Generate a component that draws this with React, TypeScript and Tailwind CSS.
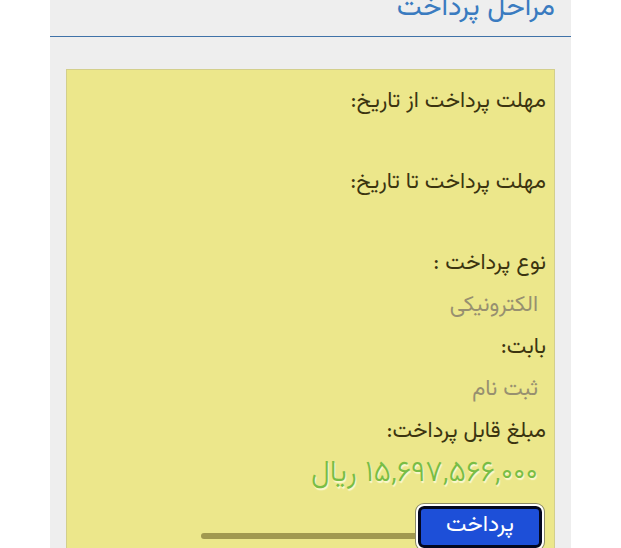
type Field = { label: string; value?: string };

const fields: Field[] = [
  { label: 'مهلت پرداخت از تاریخ:' },
  { label: 'مهلت پرداخت تا تاریخ:' },
  { label: 'نوع پرداخت :', value: 'الکترونیکی' },
  { label: 'بابت:', value: 'ثبت نام' },
];

export default function App() {
  return (
    <div
      dir="rtl"
      lang="fa"
      className="h-screen overflow-hidden bg-white px-[50px] font-['Vazirmatn','DejaVu_Sans',sans-serif] font-normal"
    >
      <main className="min-h-full bg-[#eeeeee]">
        <header className="border-b border-[#3f72a8] px-4 pb-5">
          <h1 className="text-[28px] leading-4 text-[#3a7bc0]">مراحل پرداخت</h1>
        </header>
        <section className="relative mx-4 mt-8 border border-[#d3cf8c] bg-[#ece78b] px-2 pt-[11px] pb-8 text-[22px] leading-[42px] text-[#3b3410]">
          <dl>
            {fields.map((field) => (
              <div key={field.label}>
                <dt>{field.label}</dt>
                <dd className={field.value ? 'px-2 text-[#979070]' : 'h-[39px]'}>{field.value}</dd>
              </div>
            ))}
            <div>
              <dt>مبلغ قابل پرداخت:</dt>
              <dd className="px-2 text-[30px] font-light text-[#78bd45] [text-shadow:1px_2px_1px_#fbf8d0]">
                ۱۵,۶۹۷,۵۶۶,۰۰۰ ریال
              </dd>
            </div>
          </dl>
          <div className="absolute top-[463px] right-32 left-[134px] h-[6px] rounded-full bg-[#a1994f]" />
          <button
            type="button"
            className="relative mx-1 mt-[11px] block h-[42px] w-[124px] rounded-md border-3 border-[#03071f] bg-[#1d4fd8] pb-1 text-[23px] leading-[30px] text-white outline-2 outline-white ring-3 ring-[#8b8a66]"
          >
            پرداخت
          </button>
        </section>
      </main>
    </div>
  );
}
